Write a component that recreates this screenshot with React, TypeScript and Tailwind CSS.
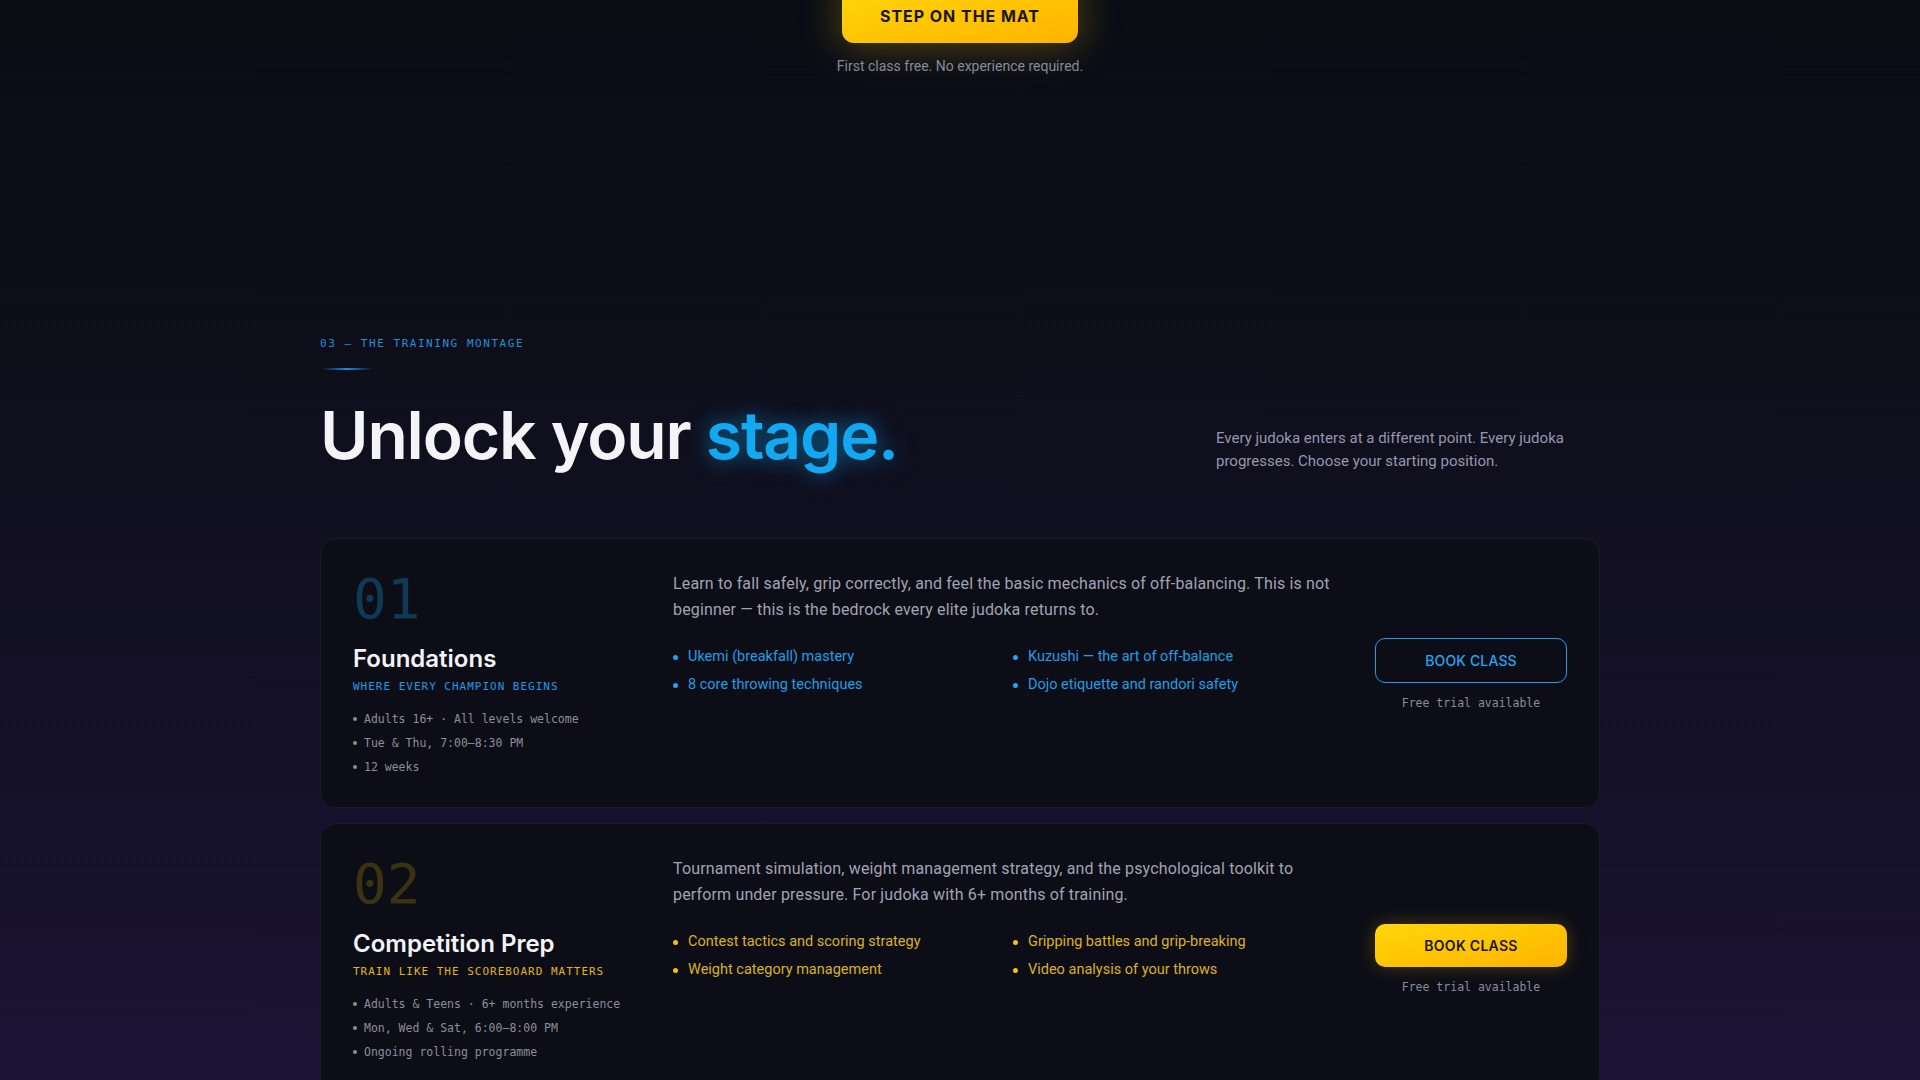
import React from "react";

type Stage = {
  num: string;
  title: string;
  tagline: string;
  meta: string[];
  blurb: string;
  skills: string[];
  accent: "sky" | "gold";
};

const stages: Stage[] = [
  {
    num: "01",
    title: "Foundations",
    tagline: "WHERE EVERY CHAMPION BEGINS",
    meta: ["Adults 16+ · All levels welcome", "Tue & Thu, 7:00–8:30 PM", "12 weeks"],
    blurb:
      "Learn to fall safely, grip correctly, and feel the basic mechanics of off-balancing. This is not beginner — this is the bedrock every elite judoka returns to.",
    skills: [
      "Ukemi (breakfall) mastery",
      "Kuzushi — the art of off-balance",
      "8 core throwing techniques",
      "Dojo etiquette and randori safety",
    ],
    accent: "sky",
  },
  {
    num: "02",
    title: "Competition Prep",
    tagline: "TRAIN LIKE THE SCOREBOARD MATTERS",
    meta: ["Adults & Teens · 6+ months experience", "Mon, Wed & Sat, 6:00–8:00 PM", "Ongoing rolling programme"],
    blurb:
      "Tournament simulation, weight management strategy, and the psychological toolkit to perform under pressure. For judoka with 6+ months of training.",
    skills: [
      "Contest tactics and scoring strategy",
      "Gripping battles and grip-breaking",
      "Weight category management",
      "Video analysis of your throws",
    ],
    accent: "gold",
  },
];

const mono = "font-['DejaVu_Sans_Mono','Liberation_Mono',monospace]";
const body = "font-['Roboto','Noto_Sans',sans-serif]";
const display = "font-['Inter','Roboto',sans-serif]";

function StageCard({ stage }: { stage: Stage }) {
  const sky = stage.accent === "sky";

  return (
    <div className="grid grid-cols-[272px_1fr_192px] rounded-2xl border border-[#1b1a2c] bg-[#0c0d17] px-8 pt-8 pb-7">
      <div>
        <div className={`${mono} text-[56px] leading-none ${sky ? "text-[#0f3a53]" : "text-[#3a3312]"}`}>
          {stage.num}
        </div>
        <h3 className={`${display} mt-4 text-2xl leading-8 font-semibold text-[#f4f4f8]`}>{stage.title}</h3>
        <p className={`${mono} mt-1 text-[11px] leading-4 tracking-[0.09em] ${sky ? "text-[#1d9be3]" : "text-[#e3b511]"}`}>
          {stage.tagline}
        </p>
        <ul className={`${mono} mt-3 text-[11.5px] leading-6 text-[#8c8e9c]`}>
          {stage.meta.map((m) => (
            <li key={m} className="flex items-center gap-[7px]">
              <span className="h-[4px] w-[4px] rounded-full bg-[#8c8e9c]" />
              {m}
            </li>
          ))}
        </ul>
      </div>

      <div className={`${body} ml-12 mr-9`}>
        <p className="text-[16px] leading-[26px] tracking-[0.01em] text-[#a1a3b3]">{stage.blurb}</p>
        <ul className="mt-5 grid grid-cols-2 gap-x-[14px] text-[14.5px] leading-7">
          {stage.skills.map((s) => (
            <li key={s} className={`flex items-center gap-[10px] ${sky ? "text-[#1c9fe6]" : "text-[#dcb216]"}`}>
              <span className={`h-[5px] w-[5px] rounded-full ${sky ? "bg-[#1ea8f2]" : "bg-[#f5c400]"}`} />
              {s}
            </li>
          ))}
        </ul>
      </div>

      <div className="flex flex-col items-center justify-center">
        {sky ? (
          <button className={`${display} h-[45px] w-full rounded-[10px] border border-[#1e9ee6] text-[14px] font-medium tracking-[0.01em] text-[#22a6ee]`}>
            BOOK CLASS
          </button>
        ) : (
          <button className={`${display} h-[43px] w-full rounded-[10px] bg-gradient-to-br from-[#ffd60a] to-[#ffb300] text-[14px] font-semibold tracking-[0.02em] text-[#1c1708] shadow-[0_0_18px_rgba(255,190,0,0.25)]`}>
            BOOK CLASS
          </button>
        )}
        <p className={`${mono} mt-3 text-[11.5px] text-[#8a8c9a]`}>Free trial available</p>
      </div>
    </div>
  );
}

export default function App() {
  return (
    <div className="min-h-screen overflow-hidden bg-gradient-to-b from-[#0a0d14] via-[#100f1e] via-40% to-[#1d1439] pb-24">
      {/* tail of the hero */}
      <div className="flex flex-col items-center">
        <button className={`${display} -mt-[13px] h-[56px] w-[236px] rounded-xl bg-gradient-to-br from-[#ffd60a] to-[#ffb300] pt-[2px] text-[16px] font-bold tracking-[0.06em] text-[#1a1508] shadow-[0_0_40px_rgba(255,196,0,0.35)]`}>
          STEP ON THE MAT
        </button>
        <p className={`${body} mt-[13px] text-[14px] leading-5 text-[#868a98]`}>First class free. No experience required.</p>
      </div>

      {/* training stages */}
      <section className="mx-auto mt-[260px] max-w-[1280px]">
        <p className={`${mono} text-[11px] leading-4 tracking-[0.14em] text-[#1e8fd6]`}>03 — THE TRAINING MONTAGE</p>
        <div className="mt-4 ml-[2px] h-[2px] w-[50px] bg-gradient-to-r from-transparent via-[#1e8fd6] to-transparent" />

        <div className="mt-8 flex items-end justify-between">
          <h2 className={`${display} text-[66px] leading-none font-semibold tracking-[-0.018em] text-[#f3f3f8]`}>
            Unlock your{" "}
            <span className="text-[#12a9f2] [text-shadow:0_0_22px_rgba(14,165,233,0.65)]">stage.</span>
          </h2>
          <p className={`${body} mb-[-5px] w-[384px] text-[15px] leading-[23px] text-[#9896ad]`}>
            Every judoka enters at a different point. Every judoka progresses. Choose your starting position.
          </p>
        </div>

        <div className="mt-[70px] flex flex-col gap-[15px]">
          {stages.map((s) => (
            <StageCard key={s.num} stage={s} />
          ))}
        </div>
      </section>
    </div>
  );
}
